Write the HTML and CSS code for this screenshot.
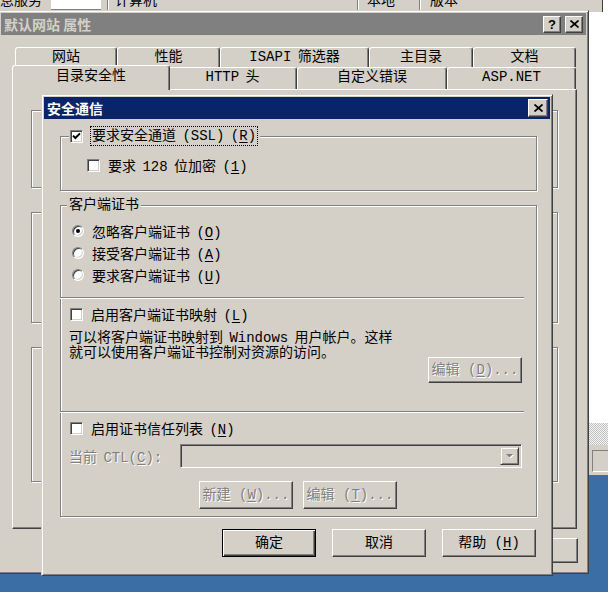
FILE: index.html
```html
<!DOCTYPE html>
<html lang="zh-CN">
<head>
    <meta charset="UTF-8">
    <meta name="viewport" content="width=device-width, initial-scale=1.0">
    <title>安全通信</title>
    <link rel="stylesheet" href="styles.css">
</head>
<body>
    <!-- window behind everything -->
    <div class="explorer">
        <div class="list-header">
            <div class="col col-name"><span class="cut">信息服务</span></div>
            <div class="col-field"></div>
            <div class="col col-computer">计算机</div>
            <div class="col col-local">本地</div>
            <div class="col col-version">版本</div>
        </div>
        <div class="list-body"></div>
        <div class="stipple"></div>
        <div class="status-bar"><div class="status-box"></div></div>
    </div>

    <!-- 默认网站 属性 -->
    <div class="window prop-window">
        <div class="titlebar inactive">
            <span class="title-text">默认网站 属性</span>
            <div class="caption-buttons">
                <button type="button" class="caption-btn help">?</button>
                <button type="button" class="caption-btn">
                    <svg width="9" height="8" viewBox="0 0 9 8"><path d="M0.5 0.5L8.5 7.5M8.5 0.5L0.5 7.5" stroke="#000" stroke-width="1.7"/></svg>
                </button>
            </div>
        </div>
        <div class="tab-control">
            <div class="tab-row back">
                <div class="tab t-site">网站</div>
                <div class="tab t-perf">性能</div>
                <div class="tab t-isapi">ISAPI 筛选器</div>
                <div class="tab t-home">主目录</div>
                <div class="tab t-docs">文档</div>
            </div>
            <div class="tab-row front">
                <div class="tab t-security active">目录安全性</div>
                <div class="tab t-http">HTTP 头</div>
                <div class="tab t-errors">自定义错误</div>
                <div class="tab t-aspnet">ASP.NET</div>
            </div>
            <div class="tab-panel">
                <div class="etched ghost g1"></div>
                <div class="etched ghost g2"></div>
                <div class="etched ghost g3"></div>
            </div>
        </div>
        <div class="prop-buttons">
            <button type="button" class="btn small">确定</button>
            <button type="button" class="btn small">取消</button>
            <button type="button" class="btn small">应用</button>
            <button type="button" class="btn small">帮助</button>
        </div>
    </div>

    <!-- 安全通信 -->
    <div class="window dialog">
        <div class="titlebar active">
            <span class="title-text">安全通信</span>
            <div class="caption-buttons">
                <button type="button" class="caption-btn close">
                    <svg width="9" height="8" viewBox="0 0 9 8"><path d="M0.5 0.5L8.5 7.5M8.5 0.5L0.5 7.5" stroke="#000" stroke-width="1.7"/></svg>
                </button>
            </div>
        </div>
        <div class="dialog-body">
            <fieldset class="group ssl-group">
                <legend class="check-legend">
                    <label class="check-row">
                        <span class="checkbox">
                            <svg width="9" height="9" viewBox="0 0 9 9"><path d="M1 3.6L3.4 6L8 1.4" fill="none" stroke="#000" stroke-width="2"/></svg>
                        </span>
                        <span class="focus">要求安全通道 (SSL) (<u>R</u>)</span>
                    </label>
                </legend>
                <label class="check-row indent">
                    <span class="checkbox"></span>
                    <span>要求 128 位加密 (<u>1</u>)</span>
                </label>
            </fieldset>

            <fieldset class="group cert-group">
                <legend class="text-legend">客户端证书</legend>
                <div class="radio-list">
                    <label class="radio-row"><span class="radio on"></span><span>忽略客户端证书 (<u>O</u>)</span></label>
                    <label class="radio-row"><span class="radio"></span><span>接受客户端证书 (<u>A</u>)</span></label>
                    <label class="radio-row"><span class="radio"></span><span>要求客户端证书 (<u>U</u>)</span></label>
                </div>
                <div class="separator"></div>
                <label class="check-row">
                    <span class="checkbox"></span>
                    <span>启用客户端证书映射 (<u>L</u>)</span>
                </label>
                <div class="mapping-row">
                    <p class="mapping-text">可以将客户端证书映射到 Windows 用户帐户。这样<br>就可以使用客户端证书控制对资源的访问。</p>
                    <button type="button" class="btn edit-map" disabled>编辑 (<u>D</u>)...</button>
                </div>
                <div class="separator second"></div>
                <label class="check-row">
                    <span class="checkbox"></span>
                    <span>启用证书信任列表 (<u>N</u>)</span>
                </label>
                <div class="ctl-row">
                    <span class="ctl-label disabled">当前 CTL(<u>C</u>):</span>
                    <div class="combo">
                        <span class="combo-btn">
                            <svg width="9" height="6" viewBox="0 0 9 6"><path d="M2 2H9L5.5 5.5Z" fill="#fff"/><path d="M1 1H8L4.5 4.5Z" fill="#808080"/></svg>
                        </span>
                    </div>
                </div>
                <div class="ctl-buttons">
                    <button type="button" class="btn" disabled>新建 (<u>W</u>)...</button>
                    <button type="button" class="btn" disabled>编辑 (<u>T</u>)...</button>
                </div>
            </fieldset>

            <div class="dialog-buttons">
                <button type="button" class="btn default">确定</button>
                <button type="button" class="btn">取消</button>
                <button type="button" class="btn">帮助 (<u>H</u>)</button>
            </div>
        </div>
    </div>
</body>
</html>
```

FILE: styles.css
```css
* {
    box-sizing: border-box;
}
body {
    margin: 0;
    width: 608px;
    height: 592px;
    position: relative;
    overflow: hidden;
    background: #3a6ea5;
    color: #000;
    font-family: "Liberation Mono", "Noto Sans CJK SC", monospace;
    font-size: 14px;
    word-spacing: -2px;
}
button {
    font: inherit;
    color: inherit;
    padding: 0;
    margin: 0;
}
u {
    text-decoration-thickness: 1px;
    text-underline-offset: 2px;
}

/* shared 3d bits */
.etched {
    border: 1px solid #808080;
    box-shadow: inset 1px 1px #fff, 1px 1px #fff;
}
.btn {
    height: 26px;
    width: 94px;
    background: #d4d0c8;
    border: 1px solid;
    border-color: #fff #404040 #404040 #fff;
    box-shadow: inset -1px -1px #808080;
    font-size: 14px;
    line-height: 22px;
}
.btn.default {
    border-color: #000;
    box-shadow: inset 1px 1px #fff, inset -1px -1px #404040, inset -2px -2px #808080;
}
.btn:disabled,
.disabled {
    color: #808080;
    text-shadow: 1px 1px 0 #fff;
}

/* back window */
.explorer {
    position: absolute;
    left: 0;
    top: -8px;
    width: 608px;
    height: 483px;
    background: #fff;
    display: flex;
    flex-direction: column;
}
.list-header {
    display: flex;
    width: 603px;
    height: 20px;
    background: #d4d0c8;
    border-right: 1px solid #404040;
    line-height: 18px;
    white-space: nowrap;
    overflow: hidden;
}
.list-header .col {
    height: 100%;
    overflow: hidden;
}
.col-name {
    width: 51px;
}
.col-name .cut {
    display: inline-block;
    margin-left: -14px;
}
.col-field {
    width: 50px;
    height: 18px;
    background: #fff;
    border-bottom: 1px solid #808080;
    margin-right: 6px;
}
.col-computer,
.col-local,
.col-version {
    border-left: 1px solid #808080;
    box-shadow: inset 1px 0 #fff;
}
.col-computer {
    width: 250px;
    padding-left: 7px;
}
.col-local {
    width: 62px;
    padding-left: 9px;
}
.col-version {
    flex: 1;
    padding-left: 10px;
}
.list-body {
    flex: 1;
    background: #fff;
}
.stipple {
    height: 22px;
    background: repeating-conic-gradient(#c0c0c0 0 25%, #f4f4f4 0 50%) 0 0 / 2px 2px;
}
.status-bar {
    height: 30px;
    background: #d4d0c8;
    padding: 5px 0 0 592px;
}
.status-box {
    width: 40px;
    height: 22px;
    border: 1px solid;
    border-color: #808080 #fff #fff #808080;
}

/* windows */
.window {
    position: absolute;
    background: #d4d0c8;
    border: 1px solid;
    border-color: #d4d0c8 #404040 #404040 #d4d0c8;
    box-shadow: inset 1px 1px #fff, inset -1px -1px #808080;
    padding: 2px;
    display: flex;
    flex-direction: column;
}
.titlebar {
    height: 22px;
    flex: none;
    display: flex;
    align-items: center;
    padding: 0 2px 0 3px;
    font-family: "Noto Sans CJK SC", sans-serif;
    font-weight: bold;
    font-size: 14px;
    word-spacing: 0;
}
.titlebar.inactive {
    background: #808080;
    color: #d4d0c8;
}
.titlebar.active {
    background: #0a246a;
    color: #fff;
}
.caption-buttons {
    margin-left: auto;
    display: flex;
    gap: 4px;
}
.caption-btn {
    width: 18px;
    height: 17px;
    background: #d4d0c8;
    border: 1px solid;
    border-color: #fff #404040 #404040 #fff;
    box-shadow: inset -1px -1px #808080;
    display: flex;
    align-items: center;
    justify-content: center;
    color: #000;
}
.caption-btn.help {
    font-family: "Liberation Sans", sans-serif;
    font-weight: bold;
    font-size: 13px;
    line-height: 1;
}
.caption-btn.close {
    width: 20px;
    height: 18px;
}

/* 默认网站 属性 */
.prop-window {
    left: -2px;
    top: 10px;
    width: 591px;
    height: 564px;
}
.prop-window .titlebar {
    padding-right: 3px;
}
.tab-control {
    margin: 12px 9px 0 11px;
}
.tab-row {
    display: flex;
}
.tab-row.back {
    height: 20px;
    padding-left: 3px;
}
.tab-row.front {
    height: 22px;
    padding-left: 2px;
}
.tab {
    flex: none;
    background: #d4d0c8;
    border: 1px solid;
    border-bottom: none;
    border-color: #fff #404040 transparent #fff;
    box-shadow: inset -1px 0 #808080;
    border-radius: 3px 3px 0 0;
    text-align: center;
    line-height: 19px;
    white-space: nowrap;
}
.t-site { width: 102px; }
.t-perf { width: 103px; }
.t-isapi { width: 149px; }
.t-home { width: 104px; }
.t-docs { width: 103px; }
.t-security { width: 154px; }
.t-http { width: 129px; }
.t-errors { width: 150px; }
.t-aspnet { width: 129px; }
.tab.active {
    position: relative;
    z-index: 1;
    width: 158px;
    height: 25px;
    margin: -2px -2px -1px -2px;
    line-height: 21px;
}
.tab-panel {
    height: 440px;
    border: 1px solid;
    border-color: #fff #404040 #404040 #fff;
    box-shadow: inset -1px -1px #808080;
    padding: 20px 18px 0;
    display: flex;
    flex-direction: column;
    gap: 24px;
}
.ghost.g1 { height: 78px; }
.ghost.g2 { height: 111px; }
.ghost.g3 { height: 135px; }
.prop-buttons {
    display: flex;
    justify-content: flex-end;
    gap: 8px;
    margin: 9px 8px 0 0;
}
.btn.small {
    width: 90px;
    height: 25px;
}

/* 安全通信 */
.dialog {
    left: 41px;
    top: 94px;
    width: 512px;
    height: 482px;
    z-index: 2;
}
.dialog-body {
    padding: 8px 13px 0 16px;
    display: flex;
    flex-direction: column;
}
.group {
    margin: 0;
    min-width: 0;
    border: 1px solid #808080;
    box-shadow: inset 1px 1px #fff, 1px 1px #fff;
    padding: 0 14px 14px 8px;
}
.group legend {
    height: 18px;
    line-height: 18px;
    background: #d4d0c8;
}
.check-legend {
    padding: 0 3px 0 1px;
}
.text-legend {
    padding: 0 2px;
    margin-left: -2px;
}
.cert-group {
    margin-top: 5px;
    padding-bottom: 7px;
}
.check-row,
.radio-row {
    display: flex;
    align-items: center;
    gap: 8px;
    height: 22px;
    white-space: nowrap;
}
.check-legend .check-row {
    height: 18px;
}
.check-row.indent {
    margin: 9px 0 0 18px;
}
.checkbox {
    flex: none;
    width: 13px;
    height: 13px;
    background: #fff;
    border: 1px solid;
    border-color: #808080 #fff #fff #808080;
    box-shadow: inset 1px 1px #404040, inset -1px -1px #d4d0c8;
    display: flex;
    align-items: center;
    justify-content: center;
}
.focus {
    outline: 1px dotted #000;
    padding: 0 1px;
    line-height: 18px;
}
.radio-list {
    padding: 6px 0 0 3px;
}
.radio {
    flex: none;
    width: 12px;
    height: 12px;
    border-radius: 50%;
    background: #fff;
    border: 1px solid;
    border-color: #808080 #fff #fff #808080;
    box-shadow: inset 1px 1px #404040, inset -1px -1px #d4d0c8;
    display: flex;
    align-items: center;
    justify-content: center;
}
.radio.on::after {
    content: '';
    width: 4px;
    height: 4px;
    border-radius: 50%;
    background: #000;
}
.cert-group .check-row {
    margin: 4px 0 0 1px;
}
.separator {
    height: 2px;
    border-top: 1px solid #808080;
    border-bottom: 1px solid #fff;
    margin: 11px -2px 0 -9px;
}
.separator.second {
    margin-top: 28px;
}
.mapping-row {
    display: flex;
    justify-content: space-between;
    margin-top: 6px;
}
.mapping-text {
    margin: 0;
    line-height: 15px;
    white-space: nowrap;
}
.edit-map {
    margin-top: 26px;
}
.ctl-row {
    display: flex;
    align-items: center;
    height: 24px;
    margin-top: 5px;
}
.ctl-label {
    width: 111px;
    flex: none;
}
.combo {
    flex: 1;
    height: 24px;
    background: #d4d0c8;
    border: 1px solid;
    border-color: #808080 #fff #fff #808080;
    box-shadow: inset 1px 1px #404040, inset -1px -1px #d4d0c8;
    padding: 2px;
    display: flex;
    justify-content: flex-end;
}
.combo-btn {
    width: 19px;
    height: 100%;
    background: #d4d0c8;
    border: 1px solid;
    border-color: #d4d0c8 #404040 #404040 #d4d0c8;
    box-shadow: inset 1px 1px #fff, inset -1px -1px #808080;
    display: flex;
    align-items: center;
    justify-content: center;
}
.ctl-buttons {
    display: flex;
    justify-content: center;
    gap: 10px;
    margin: 13px 0 0 5px;
}
.ctl-buttons .btn {
    height: 28px;
    line-height: 24px;
}
.dialog-buttons {
    display: flex;
    justify-content: flex-end;
    gap: 16px;
    margin: 12px 1px 0 0;
}
.dialog-buttons .btn {
    height: 28px;
    line-height: 24px;
}
```
